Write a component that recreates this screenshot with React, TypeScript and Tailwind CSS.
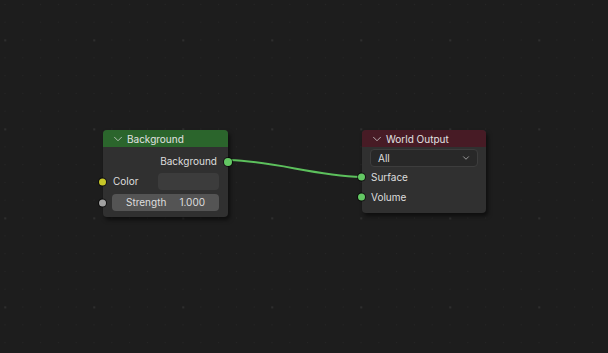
import { ChevronDown } from "lucide-react";

const font = { fontFamily: "Inter, 'Noto Sans', sans-serif" };

function Socket({ color, side }: { color: string; side: "left" | "right" }) {
  return (
    <span
      className={`absolute top-1/2 h-[7px] w-[7px] -translate-y-1/2 rounded-full ring-1 ring-black/60 ${
        side === "left" ? "-left-[4px]" : "-right-[4px]"
      } ${color}`}
    />
  );
}

function Header({ title, bg }: { title: string; bg: string }) {
  return (
    <div className={`flex h-[17px] items-center gap-[2px] rounded-t-[4px] pl-[8px] ${bg}`}>
      <ChevronDown size={14} strokeWidth={1.3} className="text-[#d8d8d8]" />
      <span className="text-[10px] leading-none text-[#e2e2e2]">{title}</span>
    </div>
  );
}

function Grid() {
  return (
    <svg className="absolute inset-0 h-full w-full" aria-hidden>
      <defs>
        <pattern id="small" x="4.5" y="3.9" width="17.8" height="17.8" patternUnits="userSpaceOnUse">
          <rect x="0" y="0" width="1" height="1" fill="#272727" />
        </pattern>
        <pattern id="big" x="4.3" y="39.4" width="89" height="89" patternUnits="userSpaceOnUse">
          <rect x="0" y="0" width="2" height="2" fill="#2e2e2e" />
        </pattern>
      </defs>
      <rect width="100%" height="100%" fill="url(#small)" />
      <rect width="100%" height="100%" fill="url(#big)" />
    </svg>
  );
}

export default function App() {
  return (
    <div className="relative h-[353px] w-[608px] overflow-hidden bg-[#1d1d1d]" style={font}>
      <Grid />

      <svg className="absolute inset-0 h-full w-full" aria-hidden>
        <path d="M229 160 C 280 162, 310 175, 362 177" fill="none" stroke="#5cc05c" strokeWidth="2" />
      </svg>

      {/* Background node */}
      <div className="absolute left-[103px] top-[130px] w-[125px] rounded-[4px] bg-[#303030] shadow-[2px_3px_4px_rgba(0,0,0,0.55)]">
        <Header title="Background" bg="bg-[#2b652c]" />
        <div className="flex flex-col pb-[6px] text-[10px] text-[#dedede]">
          <div className="relative flex h-[25px] items-center justify-end pr-[11px] pt-[4px]">
            Background
            <span className="absolute -right-[4px] top-[11px] h-[8px] w-[8px] rounded-full bg-[#63c763] ring-1 ring-black/60" />
          </div>
          <div className="relative mt-[1px] flex h-[17px] items-center pl-[10px] pr-[9px]">
            <Socket color="bg-[#c7c729]" side="left" />
            <span className="w-[45px]">Color</span>
            <div className="h-[17px] flex-1 rounded-[4px] bg-[#3c3c3c]" />
          </div>
          <div className="relative mt-[4px] flex h-[17px] items-center pl-[9px] pr-[9px]">
            <Socket color="bg-[#a1a1a1]" side="left" />
            <div className="flex h-[17px] flex-1 items-center justify-between rounded-[4px] bg-[#545454] px-[14px]">
              <span>Strength</span>
              <span>1.000</span>
            </div>
          </div>
        </div>
      </div>

      {/* World Output node */}
      <div className="absolute left-[362px] top-[130px] w-[124px] rounded-[4px] bg-[#303030] shadow-[2px_3px_4px_rgba(0,0,0,0.55)]">
        <Header title="World Output" bg="bg-[#471b25]" />
        <div className="flex flex-col pb-[6px] text-[10px] text-[#dedede]">
          <div className="mx-[8px] mt-[2px] flex h-[18px] items-center justify-between rounded-[4px] border border-[#3d3d3d] bg-[#282828] pl-[7px] pr-[6px]">
            <span>All</span>
            <ChevronDown size={10} strokeWidth={1.6} className="text-[#d0d0d0]" />
          </div>
          <div className="relative flex h-[20px] items-center pl-[9px]">
            <Socket color="bg-[#63c763]" side="left" />
            Surface
          </div>
          <div className="relative flex h-[20px] items-center pl-[9px]">
            <Socket color="bg-[#63c763]" side="left" />
            Volume
          </div>
        </div>
      </div>
    </div>
  );
}
